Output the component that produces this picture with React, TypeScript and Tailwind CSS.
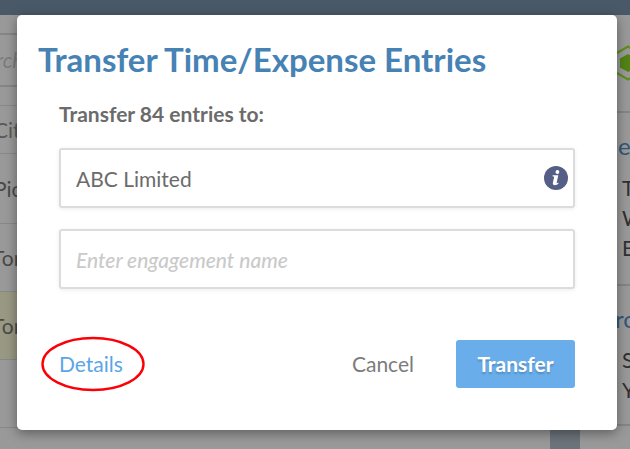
import React from "react";

function InfoIcon() {
  return (
    <svg viewBox="0 0 24 24" className="size-6" aria-hidden="true">
      <circle cx="12" cy="12" r="12" fill="#555e86" />
      <circle cx="13.4" cy="6" r="1.9" fill="#fff" />
      <path
        d="M8.6 9.300h5.700l-1.600 7.100c-.2.900.3 1 1.600.2l.2.900c-1.100 1-2.300 1.700-3.600 1.700-1.700 0-2.400-.9-2-2.600l1.200-5.300c.1-.6-.1-.8-.8-.9l-.8-.1z"
        fill="#fff"
      />
    </svg>
  );
}

function HexLogo() {
  return (
    <svg viewBox="0 0 32 36" className="h-9 w-8 shrink-0" aria-hidden="true">
      <path d="M16 1.500 30 9.700v16.600L16 34.500 2 26.300V9.700z" fill="none" stroke="#5c9019" strokeWidth="2.200" />
      <path d="M16 9 24 13.500v9L16 27l-8-4.500v-9z" fill="#528314" />
    </svg>
  );
}

function EntryList() {
  return (
    <div className="min-w-0 flex-1 overflow-hidden text-[21px] leading-[26px] text-[#494949]">
      <div className="mt-[18px] flex h-[54px] items-center border-y-2 border-[#858585] italic text-[#7c7c7c]">
        <span className="-ml-1">rch</span>
      </div>
      <div className="mt-[18px] flex h-[49px] items-center border-y border-[#888] text-[#5a5a5a]">
        <span className="-ml-1.5">Cit</span>
      </div>
      <div className="flex h-[70px] items-center border-b border-[#888]">
        <span className="-ml-1.5">Pic</span>
      </div>
      <div className="flex h-[68px] items-center border-b border-[#888]">
        <span className="-ml-2">Tor</span>
      </div>
      <div className="flex h-[68px] items-center border-b border-[#888] bg-[#999983]">
        <span className="-ml-2">Tor</span>
      </div>
      <div className="h-[68px] border-b border-[#888]" />
    </div>
  );
}

function Sidebar() {
  return (
    <div className="w-[50px] overflow-hidden pl-8 text-[24px] leading-[29px] text-[#303030]">
      <div className="flex h-[98px] items-center border-b-2 border-[#858585]">
        <HexLogo />
      </div>
      <div className="flex h-[173px] flex-col border-b-2 border-[#858585] pt-[18px]">
        <h2 className="pl-1.5 text-[#315777]">e</h2>
        <div className="pt-[13px] pl-2.5 text-[21px] leading-[30px]">
          <p>T</p>
          <p>W</p>
          <p>E</p>
        </div>
      </div>
      <div className="flex h-[140px] flex-col border-b-2 border-[#858585] pt-[18px]">
        <h2 className="pl-[3px] text-[#315777]">ro</h2>
        <div className="pt-3 pl-2.5 text-[21px] leading-[30px]">
          <p>S</p>
          <p>Y</p>
        </div>
      </div>
    </div>
  );
}

const field =
  "block h-[60px] w-full rounded-[3px] border-2 border-[#dcdcdc] bg-white px-[15px] text-[21px] text-[#6b6b6b] shadow-[0_1px_4px_rgba(0,0,0,0.08)] outline-none placeholder:font-medium placeholder:italic placeholder:text-[#cacaca]";

function TransferDialog() {
  return (
    <div
      role="dialog"
      aria-modal="true"
      aria-labelledby="dialog-title"
      className="w-full max-w-[600px] rounded-[5px] bg-white pt-6 pb-[42px] shadow-[0_3px_12px_rgba(0,0,0,0.4)]"
    >
      <h1 id="dialog-title" className="px-[21px] text-[33px] leading-10 font-bold whitespace-nowrap text-[#4782b4]">
        Transfer Time/Expense Entries
      </h1>
      <form className="px-[42px] pt-[22px]" onSubmit={(e) => e.preventDefault()}>
        <label htmlFor="client" className="block text-[21px] leading-[26px] font-bold text-[#6b6b6b]">
          Transfer 84 entries to:
        </label>
        <div className="relative mt-[21px]">
          <input id="client" type="text" defaultValue="ABC Limited" className={field} />
          <button type="button" aria-label="Client information" className="absolute top-[18px] right-[7px]">
            <InfoIcon />
          </button>
        </div>
        <input
          type="text"
          aria-label="Engagement name"
          placeholder="Enter engagement name"
          className={`mt-[21px] ${field}`}
        />
        <div className="mt-[51px] flex items-center text-[21px]">
          <div className="relative mr-auto">
            <a href="#details" className="text-[#5aa5e8]">
              Details
            </a>
            <svg
              viewBox="0 0 104 56"
              className="pointer-events-none absolute top-1/2 -left-[18px] h-14 w-[104px] -translate-y-1/2"
              aria-hidden="true"
            >
              <ellipse cx="52" cy="28" rx="50.500" ry="26" fill="none" stroke="#fb0007" strokeWidth="2.400" />
            </svg>
          </div>
          <button type="button" className="mr-[42px] text-[#7c7c7c]">
            Cancel
          </button>
          <button
            type="submit"
            className="h-12 w-[119px] rounded-[3px] bg-[#69aeeb] font-bold text-white [text-shadow:0_2px_2px_rgba(0,0,0,0.2)]"
          >
            Transfer
          </button>
        </div>
      </form>
    </div>
  );
}

export default function App() {
  return (
    <div className="relative h-screen overflow-hidden bg-[#999] font-[Lato,sans-serif]">
      <header className="h-[15px] bg-[#4a5968]" />
      <main className="flex h-full">
        <EntryList />
        <div className="w-[30px] bg-[#6c737a]" />
        <Sidebar />
      </main>
      <div className="absolute inset-0 flex items-start justify-center pt-[15px] pr-[13px] pl-[17px]">
        <TransferDialog />
      </div>
    </div>
  );
}
